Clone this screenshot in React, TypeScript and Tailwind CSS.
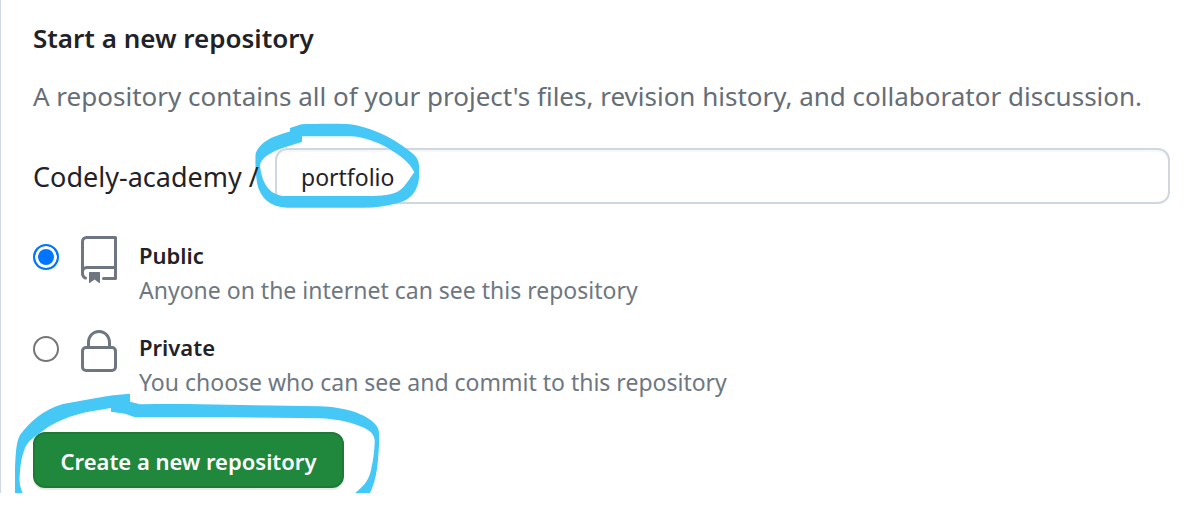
import type { ReactNode } from "react";

function RepoIcon() {
  return (
    <svg aria-hidden="true" viewBox="0 0 24 24" className="size-12 shrink-0 fill-[#6e7781]">
      <path d="M3 2.75A2.75 2.75 0 0 1 5.75 0h14.5a.75.75 0 0 1 .75.75v20.5a.75.75 0 0 1-.75.75h-6a.75.75 0 0 1 0-1.5h5.25v-4H6A1.5 1.5 0 0 0 4.5 18v.75c0 .716.43 1.334 1.05 1.605a.75.75 0 0 1-.6 1.374A3.251 3.251 0 0 1 3 18.75ZM19.5 1.5H5.75c-.69 0-1.25.56-1.25 1.25v12.651A2.989 2.989 0 0 1 6 15h13.5Z" />
      <path d="M7 18.25a.25.25 0 0 1 .25-.25h5a.25.25 0 0 1 .25.25v5.01a.25.25 0 0 1-.397.201l-2.206-1.604a.25.25 0 0 0-.294 0L7.397 23.46a.25.25 0 0 1-.397-.2v-5.01Z" />
    </svg>
  );
}

function LockIcon() {
  return (
    <svg aria-hidden="true" viewBox="0 0 24 24" className="size-12 shrink-0 fill-[#6e7781]">
      <path d="M6 9V7.25C6 3.845 8.503 1 12 1s6 2.845 6 6.25V9h.5a2.5 2.5 0 0 1 2.5 2.5v8a2.5 2.5 0 0 1-2.5 2.5h-13A2.5 2.5 0 0 1 3 19.5v-8A2.5 2.5 0 0 1 5.5 9Zm-1.5 2.5v8a1 1 0 0 0 1 1h13a1 1 0 0 0 1-1v-8a1 1 0 0 0-1-1h-13a1 1 0 0 0-1 1Zm3-4.25V9h9V7.25c0-2.67-1.922-4.75-4.5-4.75-2.578 0-4.5 2.08-4.5 4.75Z" />
    </svg>
  );
}

function NameMarker() {
  return (
    <svg
      aria-hidden="true"
      viewBox="250 120 175 92"
      className="pointer-events-none absolute -left-[25px] -top-7 h-[92px] w-[175px] fill-[#45c8f6]"
    >
      <path
        fillRule="evenodd"
        d="M290 128L301.500 124.300C315 123.500 335 123.500 347 124C372 126 398 141 412 153C417 157 419 161 419 166V178C418 190 411 200 398 203C387 206 376 207.700 363 207.700H287C270 207 260 198 257 183C256 175 255 165 255.500 155C256 149 263 142 271 138C278 135 284 133 290 131.500ZM302 136.300V141.700C293 145 283 147 273 152C265 156 260 161 260 166C262 182 268 194 283 196H363C376 196 389 196 397 192C405 188 408 180 414.300 172.500C410 162 399 155 388 148C377 142 363 136.500 350 136.300Z"
      />
    </svg>
  );
}

function ButtonMarker() {
  return (
    <svg
      aria-hidden="true"
      viewBox="10 390 375 103"
      className="pointer-events-none absolute -left-[23px] -top-[42px] h-[103px] w-[375px] fill-[#45c8f6]"
    >
      <path d="M130 393.700V401.700L140 404.300C160 404 180 404 200 404.200L320 406.300C345 407 366 414 375 424C378 427 379 430 379 434V445C378 462 377 479 370 493H355C364 486 369 480 371 470C373 461 374.500 452 374.700 440C374 432 366 428 357 425C346 421 334 419 320 418.300L233 417.300H135L125 413.800L111 411.700V408L87 412C70 416 56 421 44 430C35 436 28 441 25 448C21 458 20 468 19.500 480Q20 488 22.700 493H15V470C15.500 455 16 442 20 435C29 423 42 410 63 404C85 400 108 395 130 393.700Z" />
    </svg>
  );
}

interface OptionProps {
  id: string;
  title: string;
  note: string;
  icon: ReactNode;
  defaultChecked?: boolean;
}

function VisibilityOption({ id, title, note, icon, defaultChecked }: OptionProps) {
  return (
    <div className="flex items-start">
      <input
        id={id}
        type="radio"
        name="visibility"
        aria-describedby={`${id}-note`}
        defaultChecked={defaultChecked}
        className="mt-2 mr-4 size-[26px] shrink-0 appearance-none rounded-full border-2 border-[#767676] bg-white checked:border-[#0075ff] checked:bg-[#0075ff] checked:shadow-[inset_0_0_0_3px_#fff]"
      />
      {icon}
      <div className="ml-4 pb-0.5">
        <label htmlFor={id} className="block text-[22px] leading-[38px] font-semibold text-[#1f2328]">
          {title}
        </label>
        <p id={`${id}-note`} className="text-[23px] leading-8 text-[#6e7781]">
          {note}
        </p>
      </div>
    </div>
  );
}

export default function App() {
  return (
    <main className="bg-white font-['Noto_Sans','Open_Sans',sans-serif] text-[#1f2328]">
      <form
        onSubmit={(event) => event.preventDefault()}
        className="overflow-hidden border-l border-[#d0d7e4] pt-5 pr-[26px] pb-[5px] pl-8"
      >
        <h1 className="text-[26px] leading-9 font-semibold">Start a new repository</h1>
        <p className="mt-5 text-[26px] leading-10 text-[#656d76]">
          A repository contains all of your project's files, revision history, and collaborator discussion.
        </p>
        <div className="mt-8 flex items-center">
          <label
            htmlFor="repository-name"
            className="relative z-10 w-[242px] shrink-0 pt-0.5 text-[27px] leading-10 whitespace-nowrap"
          >
            Codely-academy /
          </label>
          <div className="relative grow">
            <input
              id="repository-name"
              type="text"
              defaultValue="portfolio"
              className="block h-14 w-full rounded-xl border-2 border-[#d0d7de] bg-white px-6 pt-0.5 text-[23px] shadow-[inset_0_2px_0_#f6f8fa] outline-none"
            />
            <NameMarker />
          </div>
        </div>
        <fieldset aria-label="Visibility" className="mt-8 flex flex-col gap-5">
          <VisibilityOption
            id="public"
            title="Public"
            note="Anyone on the internet can see this repository"
            icon={<RepoIcon />}
            defaultChecked
          />
          <VisibilityOption
            id="private"
            title="Private"
            note="You choose who can see and commit to this repository"
            icon={<LockIcon />}
          />
        </fieldset>
        <div className="relative mt-8 w-fit">
          <ButtonMarker />
          <button
            type="submit"
            className="relative block h-14 w-[311px] rounded-xl border-2 border-[#1f7a38] bg-[#1f883d] pt-0.5 text-[22px] font-semibold whitespace-nowrap text-white shadow-[0_2px_0_rgba(31,35,40,0.1)]"
          >
            Create a new repository
          </button>
        </div>
      </form>
    </main>
  );
}
